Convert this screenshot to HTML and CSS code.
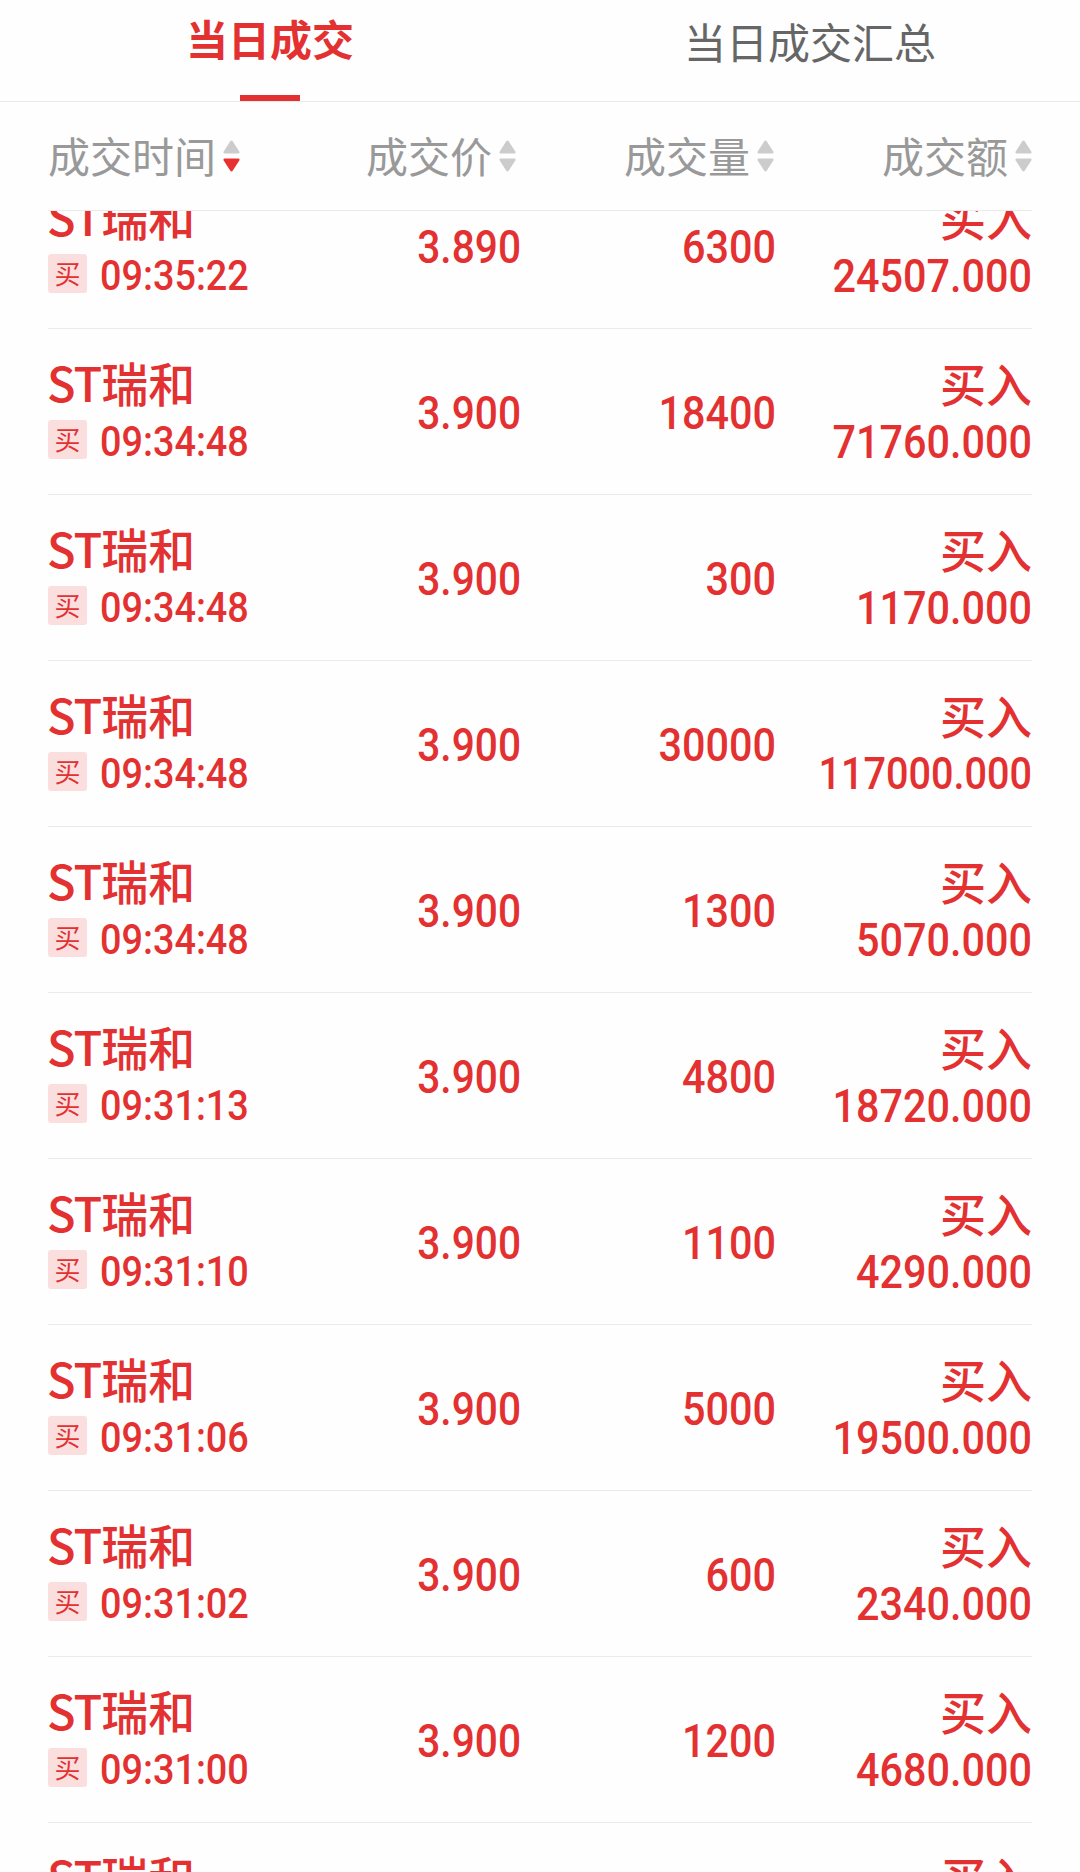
FILE: index.html
```
<!DOCTYPE html>
<html lang="zh-CN">
<head>
    <meta charset="UTF-8">
    <meta name="viewport" content="width=device-width, initial-scale=1.0">
    <title>当日成交</title>
    <link rel="stylesheet" href="styles.css">
</head>
<body>

    <!-- Tabs -->
    <nav class="tabs">
        <div class="tab active"><span>当日成交</span></div>
        <div class="tab"><span>当日成交汇总</span></div>
    </nav>

    <!-- Sortable column titles -->
    <div class="columns">
        <div class="column first"><span>成交时间</span>
            <svg class="sort desc" viewBox="0 0 17 32"><path class="up" d="M7.3 1.3Q8.5-.3 9.7 1.3L16.3 11.5Q17.2 13.5 15 13.5H2Q-.2 13.5.7 11.5Z"/><path class="down" d="M7.3 30.7Q8.5 32.3 9.7 30.7L16.3 20.5Q17.2 18.5 15 18.5H2Q-.2 18.5.7 20.5Z"/></svg>
        </div>
        <div class="column"><span>成交价</span>
            <svg class="sort" viewBox="0 0 17 32"><path class="up" d="M7.3 1.3Q8.5-.3 9.7 1.3L16.3 11.5Q17.2 13.5 15 13.5H2Q-.2 13.5.7 11.5Z"/><path class="down" d="M7.3 30.7Q8.5 32.3 9.7 30.7L16.3 20.5Q17.2 18.5 15 18.5H2Q-.2 18.5.7 20.5Z"/></svg>
        </div>
        <div class="column"><span>成交量</span>
            <svg class="sort" viewBox="0 0 17 32"><path class="up" d="M7.3 1.3Q8.5-.3 9.7 1.3L16.3 11.5Q17.2 13.5 15 13.5H2Q-.2 13.5.7 11.5Z"/><path class="down" d="M7.3 30.7Q8.5 32.3 9.7 30.7L16.3 20.5Q17.2 18.5 15 18.5H2Q-.2 18.5.7 20.5Z"/></svg>
        </div>
        <div class="column"><span>成交额</span>
            <svg class="sort" viewBox="0 0 17 32"><path class="up" d="M7.3 1.3Q8.5-.3 9.7 1.3L16.3 11.5Q17.2 13.5 15 13.5H2Q-.2 13.5.7 11.5Z"/><path class="down" d="M7.3 30.7Q8.5 32.3 9.7 30.7L16.3 20.5Q17.2 18.5 15 18.5H2Q-.2 18.5.7 20.5Z"/></svg>
        </div>
    </div>

    <!-- Deals, newest first -->
    <div class="deals">
        <div class="deal">
            <div class="stock">
                <div class="name"><span class="latin">ST</span>瑞和</div>
                <div class="time"><span class="badge">买</span><span class="num">09:35:22</span></div>
            </div>
            <div class="price num">3.890</div>
            <div class="volume num">6300</div>
            <div class="amount"><div class="side">买入</div><div class="num">24507.000</div></div>
        </div>
        <div class="deal">
            <div class="stock">
                <div class="name"><span class="latin">ST</span>瑞和</div>
                <div class="time"><span class="badge">买</span><span class="num">09:34:48</span></div>
            </div>
            <div class="price num">3.900</div>
            <div class="volume num">18400</div>
            <div class="amount"><div class="side">买入</div><div class="num">71760.000</div></div>
        </div>
        <div class="deal">
            <div class="stock">
                <div class="name"><span class="latin">ST</span>瑞和</div>
                <div class="time"><span class="badge">买</span><span class="num">09:34:48</span></div>
            </div>
            <div class="price num">3.900</div>
            <div class="volume num">300</div>
            <div class="amount"><div class="side">买入</div><div class="num">1170.000</div></div>
        </div>
        <div class="deal">
            <div class="stock">
                <div class="name"><span class="latin">ST</span>瑞和</div>
                <div class="time"><span class="badge">买</span><span class="num">09:34:48</span></div>
            </div>
            <div class="price num">3.900</div>
            <div class="volume num">30000</div>
            <div class="amount"><div class="side">买入</div><div class="num long">117000.000</div></div>
        </div>
        <div class="deal">
            <div class="stock">
                <div class="name"><span class="latin">ST</span>瑞和</div>
                <div class="time"><span class="badge">买</span><span class="num">09:34:48</span></div>
            </div>
            <div class="price num">3.900</div>
            <div class="volume num">1300</div>
            <div class="amount"><div class="side">买入</div><div class="num">5070.000</div></div>
        </div>
        <div class="deal">
            <div class="stock">
                <div class="name"><span class="latin">ST</span>瑞和</div>
                <div class="time"><span class="badge">买</span><span class="num">09:31:13</span></div>
            </div>
            <div class="price num">3.900</div>
            <div class="volume num">4800</div>
            <div class="amount"><div class="side">买入</div><div class="num">18720.000</div></div>
        </div>
        <div class="deal">
            <div class="stock">
                <div class="name"><span class="latin">ST</span>瑞和</div>
                <div class="time"><span class="badge">买</span><span class="num">09:31:10</span></div>
            </div>
            <div class="price num">3.900</div>
            <div class="volume num">1100</div>
            <div class="amount"><div class="side">买入</div><div class="num">4290.000</div></div>
        </div>
        <div class="deal">
            <div class="stock">
                <div class="name"><span class="latin">ST</span>瑞和</div>
                <div class="time"><span class="badge">买</span><span class="num">09:31:06</span></div>
            </div>
            <div class="price num">3.900</div>
            <div class="volume num">5000</div>
            <div class="amount"><div class="side">买入</div><div class="num">19500.000</div></div>
        </div>
        <div class="deal">
            <div class="stock">
                <div class="name"><span class="latin">ST</span>瑞和</div>
                <div class="time"><span class="badge">买</span><span class="num">09:31:02</span></div>
            </div>
            <div class="price num">3.900</div>
            <div class="volume num">600</div>
            <div class="amount"><div class="side">买入</div><div class="num">2340.000</div></div>
        </div>
        <div class="deal">
            <div class="stock">
                <div class="name"><span class="latin">ST</span>瑞和</div>
                <div class="time"><span class="badge">买</span><span class="num">09:31:00</span></div>
            </div>
            <div class="price num">3.900</div>
            <div class="volume num">1200</div>
            <div class="amount"><div class="side">买入</div><div class="num">4680.000</div></div>
        </div>
        <div class="deal">
            <div class="stock">
                <div class="name"><span class="latin">ST</span>瑞和</div>
            </div>
            <div></div>
            <div></div>
            <div class="amount"><div class="side">买入</div></div>
        </div>
    </div>

</body>
</html>
```
FILE: styles.css
```
* {
    box-sizing: border-box;
}
body {
    margin: 0;
    height: 1872px;
    overflow: hidden;
    display: flex;
    flex-direction: column;
    background-color: #fefefe;
    color: #e33131;
    font-family: "Noto Sans CJK SC", sans-serif;
}
/* Tabs */
.tabs {
    display: flex;
    height: 102px;
    flex: none;
    border-bottom: 1px solid #ebebeb;
}
.tab {
    flex: 1;
    display: flex;
    flex-direction: column;
    align-items: center;
    padding-top: 11px;
    font-size: 42px;
    line-height: 60px;
    color: #666;
}
.tab.active {
    padding-top: 8px;
    color: #e33131;
    font-weight: bold;
}
.tab.active::after {
    content: "";
    width: 60px;
    height: 6px;
    margin-top: auto;
    background-color: #e33131;
}
/* Column titles */
.columns {
    flex: none;
    display: grid;
    grid-template-columns: 218px 250px 258px 258px;
    align-items: center;
    height: 109px;
    margin: 0 48px;
    border-bottom: 1px solid #ebebeb;
    font-size: 42px;
    line-height: 60px;
    color: #999;
}
.column {
    display: flex;
    justify-content: flex-end;
    align-items: center;
    gap: 7px;
}
.column.first {
    justify-content: flex-start;
}
.column span {
    margin-top: -2px;
}
.sort {
    width: 17px;
    height: 32px;
    fill: #ccc;
}
.sort.desc .down {
    fill: #e83030;
}
/* Deals list, scrolled a little */
.deals {
    flex: 1;
    min-height: 0;
    overflow: hidden;
    margin: 0 48px;
}
.deal {
    display: grid;
    grid-template-columns: 218px 255px 255px 256px;
    height: 166px;
    border-bottom: 1px solid #ebebeb;
}
.deal:first-child {
    margin-top: -48px;
}
.name,
.side {
    height: 62px;
    line-height: 60px;
    margin-top: 23px;
    font-size: 47px;
    font-weight: 500;
}
.name {
    margin-left: -1px;
}
.side {
    font-size: 46px;
}
.latin {
    letter-spacing: -1px;
}
.num {
    font-family: Roboto, "Noto Sans CJK SC", sans-serif;
    font-size: 47px;
    font-weight: 500;
    line-height: 56px;
    text-align: right;
    white-space: nowrap;
    transform: scaleX(0.88);
    transform-origin: right;
}
.price,
.volume {
    align-self: center;
    padding-top: 2px;
}
.price {
    transform: scaleX(0.865);
}
.amount {
    text-align: right;
}
.amount .long {
    font-size: 45px;
}
.time {
    display: flex;
    align-items: center;
    gap: 13px;
    height: 56px;
}
.time .num {
    font-size: 42px;
    transform: scaleX(0.9);
    transform-origin: left;
}
.badge {
    width: 39px;
    height: 39px;
    margin-bottom: 5px;
    border-radius: 3px;
    background-color: #fbdfdf;
    font-size: 26px;
    line-height: 38px;
    text-align: center;
}
```
